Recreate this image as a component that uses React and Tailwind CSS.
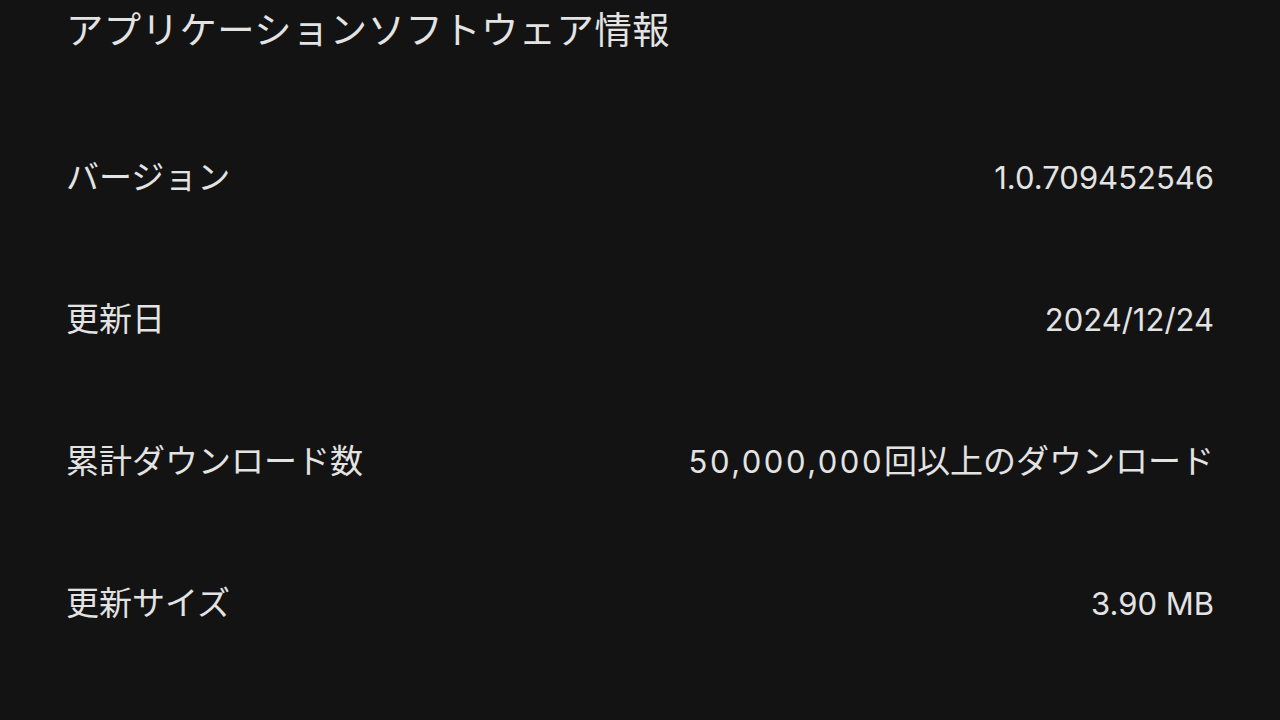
import React from 'react';

const rows = [
    { label: 'バージョン', value: '1.0.709452546' },
    { label: '更新日', value: '2024/12/24' },
    { label: '累計ダウンロード数', count: '50,000,000', value: '回以上のダウンロード' },
    { label: '更新サイズ', value: '3.90 MB' },
];

const App = () => {
    return (
        <div className="w-[1280px] h-[720px] overflow-hidden bg-[#131313] text-[#e3e3e3] px-[66px] font-['Noto_Sans_CJK_JP','Noto_Sans',sans-serif]">
            {/* Title */}
            <div className="h-[58px] flex items-center text-[37.3px] leading-none tracking-[0.5px]">
                アプリケーションソフトウェア情報
            </div>

            {/* Info rows */}
            <div className="mt-[47px] flex flex-col">
                {rows.map((row) => (
                    <div key={row.label} className="h-[142px] flex items-center">
                        <div className="flex-1 flex items-baseline justify-between leading-none">
                            <span className="text-[33px]">{row.label}</span>
                            {row.count ? (
                                <span className="text-[33px]">
                                    <span className="font-['Inter',sans-serif] text-[31px] tracking-[2.5px]">{row.count}</span>
                                    {row.value}
                                </span>
                            ) : (
                                <span className="font-['Inter','Noto_Sans_CJK_JP',sans-serif] text-[31px]">{row.value}</span>
                            )}
                        </div>
                    </div>
                ))}
            </div>
        </div>
    );
};

export default App;
